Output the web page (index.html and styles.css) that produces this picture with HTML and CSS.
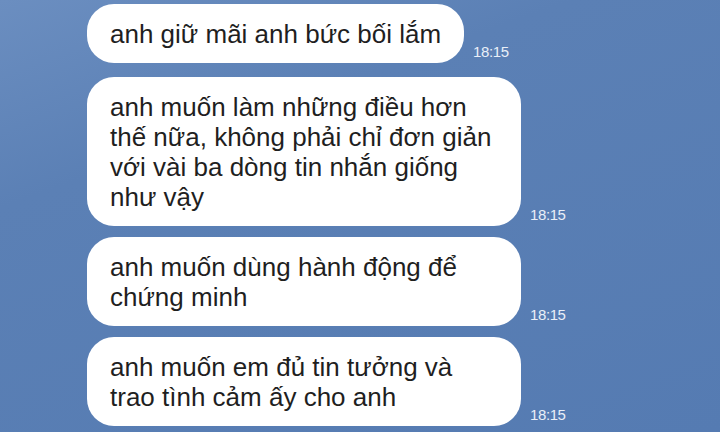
FILE: index.html
```html
<!DOCTYPE html>
<html lang="vi">
<head>
    <meta charset="UTF-8">
    <meta name="viewport" content="width=device-width, initial-scale=1.0">
    <title>Tin nhắn</title>
    <link rel="stylesheet" href="styles.css">
</head>
<body>
    <div class="chat">
        <div class="row first">
            <div class="bubble">anh giữ mãi anh bức bối lắm</div>
            <span class="time">18:15</span>
        </div>
        <div class="row">
            <div class="bubble">anh muốn làm những điều hơn thế nữa, không phải chỉ đơn giản với vài ba dòng tin nhắn giống như vậy</div>
            <span class="time">18:15</span>
        </div>
        <div class="row">
            <div class="bubble">anh muốn dùng hành động để chứng minh</div>
            <span class="time">18:15</span>
        </div>
        <div class="row">
            <div class="bubble">anh muốn em đủ tin tưởng và trao tình cảm ấy cho anh</div>
            <span class="time">18:15</span>
        </div>
    </div>
</body>
</html>
```
FILE: styles.css
```css
html, body {
    margin: 0;
    height: 100%;
}
body {
    background: linear-gradient(160deg, #6b8ec0 0%, #5b80b5 30%, #557bb2 100%);
    font-family: "Liberation Sans", Arial, sans-serif;
    overflow: hidden;
}
.chat {
    display: flex;
    flex-direction: column;
    align-items: flex-start;
    gap: 11px;
    padding: 4px 0 0 87px;
}
.row {
    display: flex;
    align-items: flex-end;
}
.row.first {
    margin-bottom: 3px;
}
.bubble {
    max-width: 388px;
    padding: 15px 23px 14px;
    background: #fff;
    border-radius: 27px;
    color: #1f1f1f;
    font-size: 26px;
    line-height: 30px;
}
.time {
    margin: 0 0 3px 9px;
    color: #e9eff8;
    font-size: 15px;
    letter-spacing: -0.4px;
}
```
